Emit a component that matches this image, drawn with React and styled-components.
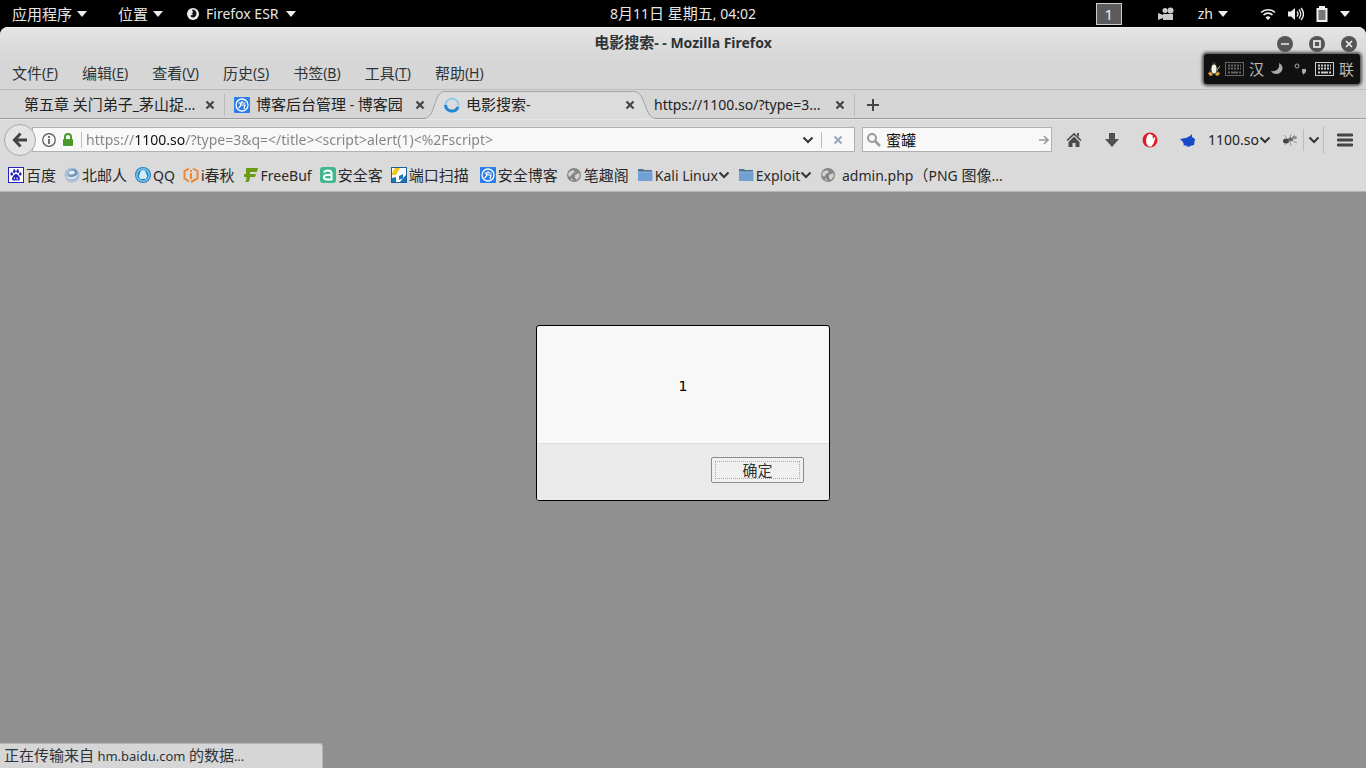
import React from "react";
import styled, { createGlobalStyle, css } from "styled-components";

const GlobalStyle = createGlobalStyle`
  * {
    box-sizing: border-box;
  }

  html,
  body,
  #root {
    height: 100%;
    margin: 0;
  }

  body,
  button,
  input {
    font-family: "Noto Sans", "Noto Sans CJK SC", sans-serif;
    font-size: 15px;
    line-height: 20px;
    color: #2e3436;
  }
`;

const Desktop = styled.div`
  display: flex;
  flex-direction: column;
  position: relative;
  min-height: 100%;
  background: #000;
`;

const PlainButton = styled.button`
  display: flex;
  align-items: center;
  padding: 0;
  border: 0;
  background: none;
  color: inherit;
  white-space: nowrap;
`;

const Latin = styled.span`
  font-size: ${(props) => (props.$small ? 13 : 14)}px;
`;

/* Panel at the top of the desktop */

const Panel = styled.header`
  display: grid;
  grid-template-columns: 1fr auto 1fr;
  align-items: center;
  height: 27px;
  background: #000;
  color: #e6e6e6;
`;

const PanelGroup = styled.div`
  display: flex;
  align-items: center;
  justify-content: ${(props) => (props.$end ? "flex-end" : "flex-start")};
  gap: 24px;
  padding: 0 ${(props) => (props.$end ? 16 : 12)}px;
`;

const PanelButton = styled(PlainButton)`
  gap: ${(props) => (props.$app ? 7 : 5)}px;
  margin-right: ${(props) => (props.$wide ? 7 : 0)}px;
`;

const SystemMenu = styled(PlainButton)`
  gap: 12px;
  margin-left: 8px;
`;

const Workspace = styled.button`
  width: 26px;
  height: 22px;
  margin-right: 12px;
  padding: 0;
  border: 1px solid #ccc;
  background: #5c5c5c;
  color: #eee;
`;

/* Browser window */

const Window = styled.main`
  display: flex;
  flex: 1;
  flex-direction: column;
  overflow: hidden;
  border-radius: 8px 8px 0 0;
  background: #dadada;
`;

const TitleBar = styled.div`
  display: grid;
  grid-template-columns: 1fr auto 1fr;
  align-items: center;
  height: 32px;
  border-top: 1px solid #f2f2f2;
  background: linear-gradient(#e4e4e4, #d7d7d7);
`;

const Title = styled.h1`
  grid-column: 2;
  margin: 0;
  padding-bottom: 2px;
  font-size: 15px;
  font-weight: 700;
  line-height: 20px;
`;

const WindowButtons = styled.div`
  display: flex;
  justify-content: flex-end;
  gap: 16px;
  padding-right: 9px;
`;

const MenuBar = styled.nav`
  display: flex;
  align-items: center;
  gap: 24px;
  height: 31px;
  padding: 0 12px 2px;
  border-bottom: 1px solid #bcbcbc;
  background: #d6d6d6;
`;

const AccessKey = styled.u`
  text-underline-offset: 2px;
`;

const TabStrip = styled.div`
  display: flex;
  height: 29px;
  padding-left: 15px;
  border-bottom: 1px solid #9c9c9c;
  background: #d5d5d5;
`;

const Tab = styled.div`
  display: flex;
  align-items: center;
  position: relative;
  width: 210px;
  height: 29px;
  padding: 0 9px;
  gap: 6px;
  ${(props) =>
    props.$divider &&
    css`
      background: linear-gradient(#bbb, #bbb) right center / 1px 22px no-repeat;
    `}
`;

const TabShape = styled.svg`
  position: absolute;
  top: 0;
  left: -11px;
`;

const TabLabel = styled.span`
  flex: 1;
  z-index: 1;
  overflow: hidden;
  color: #222;
  white-space: nowrap;
`;

const Icon = styled.svg`
  flex: none;
  z-index: 1;
`;

const IconButton = styled(PlainButton)`
  justify-content: center;
  z-index: 1;
  width: ${(props) => props.$width}px;
  height: ${(props) => props.$height || 24}px;
`;

const NavBar = styled.div`
  display: flex;
  align-items: center;
  height: 40px;
  padding-left: 4px;
  border-top: 1px solid #e6e6e6;
`;

const BackButton = styled.button`
  display: flex;
  align-items: center;
  justify-content: center;
  z-index: 1;
  width: 32px;
  height: 32px;
  padding: 0;
  border: 1px solid #a6a6a6;
  border-radius: 50%;
  background: #e4e4e4;
`;

const Field = styled.div`
  display: flex;
  align-items: center;
  height: 25px;
  border: 1px solid #b0b0b0;
  background: #f8f8f8;
`;

const UrlField = styled(Field)`
  flex: 1;
  margin: 0 7px 0 -4px;
  padding-left: 9px;
`;

const SiteIdentity = styled(PlainButton)`
  gap: 4px;
  margin-right: 5px;
`;

const SearchField = styled(Field)`
  width: 190px;
  margin-right: 3px;
  padding-left: 3px;
`;

const UrlInput = styled.input`
  flex: 1;
  min-width: 0;
  height: 22px;
  padding: 0 0 0 4px;
  border: 0;
  font-size: 14px;
  background: linear-gradient(
    90deg,
    #838383 52px,
    #111 52px,
    #111 103px,
    #838383 103px
  );
  background-clip: text;
  color: transparent;
`;

const SearchInput = styled.input`
  flex: 1;
  min-width: 0;
  height: 20px;
  padding: 0 4px;
  border: 0;
  background: none;
  color: #111;
`;

const Divider = styled.span`
  width: 1px;
  height: ${(props) => props.$height}px;
  background: #bdbdbd;
`;

const SiteButton = styled(PlainButton)`
  margin: 0 6px 0 1px;
  color: #222;
`;

const BookmarkBar = styled.nav`
  display: flex;
  align-items: center;
  height: 33px;
  padding: 0 8px;
  gap: 8px;
  border-bottom: 1px solid #b4b4b4;
`;

const Bookmark = styled.a`
  display: flex;
  align-items: center;
  margin-right: ${(props) => (props.$wide ? 3 : 0)}px;
  color: #2a2a2a;
  text-decoration: none;
  white-space: nowrap;
`;

const BookmarkLabel = styled.span`
  padding-left: 2px;
  white-space: pre;
`;

const Page = styled.section`
  display: flex;
  flex: 1;
  align-items: flex-start;
  justify-content: center;
  padding: 133px 16px 48px;
  background: #909090;
`;

const Dialog = styled.div`
  width: 294px;
  overflow: hidden;
  border: 1px solid #000;
  border-radius: 3px;
  background: #f8f8f8;
`;

const Message = styled.p`
  margin: 0;
  padding: 50px 16px 47px;
  color: #000;
  font-family: "DejaVu Sans", sans-serif;
  font-size: 14px;
  line-height: 20px;
  text-align: center;
`;

const DialogActions = styled.div`
  display: flex;
  justify-content: flex-end;
  padding: 13px 25px 17px;
  border-top: 1px solid #ddd;
  background: #eaeaea;
`;

const OkButton = styled.button`
  width: 93px;
  height: 26px;
  padding: 0;
  border: 1px solid #8c8c8c;
  border-radius: 2px;
  outline: 1px dotted #aaa;
  outline-offset: -5px;
  background: #f0f0f0;
  line-height: 20px;
`;

const StatusBar = styled.div`
  position: absolute;
  bottom: 0;
  left: 0;
  width: 323px;
  height: 25px;
  padding: 1px 4px;
  border: 1px solid #b4b4b4;
  border-width: 1px 1px 0 0;
  border-radius: 0 3px 0 0;
  background: #d6d6d6;
  white-space: nowrap;
`;

const InputMethodBar = styled.div`
  display: flex;
  align-items: center;
  position: absolute;
  top: 54px;
  right: 6px;
  width: 156px;
  height: 30px;
  padding: 0 4px;
  gap: 5px;
  border-radius: 3px;
  background: #111;
  box-shadow: 0 0 3px 2px #555;
  color: #bbb;
`;

const menus = [
  ["文件", "F"],
  ["编辑", "E"],
  ["查看", "V"],
  ["历史", "S"],
  ["书签", "B"],
  ["工具", "T"],
  ["帮助", "H"],
];

const tabs = [
  { id: 1, title: "第五章 关门弟子_茅山捉...", divider: true },
  { id: 2, title: "博客后台管理 - 博客园", icon: "blog" },
  { id: 3, title: "电影搜索-", icon: "loading", active: true },
  { id: 4, title: "https://1100.so/?type=3...", divider: true },
];

const bookmarks = [
  { title: "百度", icon: "baidu" },
  { title: "北邮人", icon: "byr" },
  { title: "QQ", icon: "qq" },
  { title: "i春秋", icon: "ichunqiu" },
  { title: "FreeBuf", icon: "freebuf" },
  { title: "安全客", icon: "anquanke" },
  { title: "端口扫描", icon: "scan", wide: true },
  { title: "安全博客", icon: "blog" },
  { title: "笔趣阁", icon: "globe" },
  { title: "Kali Linux", icon: "folder", menu: true },
  { title: "Exploit", icon: "folder", menu: true },
  { title: " admin.php（PNG 图像...", icon: "globe" },
];

// Latin runs are set a little smaller than the Chinese around them
const Text = ({ children, small }) =>
  children
    .split(/([\u0020-\u007e]+)/)
    .filter(Boolean)
    .map((run, index) =>
      /[\u0020-\u007e]/.test(run) ? (
        <Latin key={index} $small={small}>
          {run}
        </Latin>
      ) : (
        run
      )
    );

const Triangle = () => (
  <svg width="10" height="6" viewBox="0 0 10 6">
    <path d="M0 0h10L5 6z" fill="#eee" />
  </svg>
);

const Chevron = () => (
  <svg width="12" height="8" viewBox="0 0 12 8">
    <path d="M1.5 1.5 6 6l4.500-4.500" fill="none" stroke="#333" strokeWidth="2" />
  </svg>
);

const CloseIcon = ({ color = "#444" }) => (
  <svg width="10" height="10" viewBox="0 0 10 10">
    <path d="M1.500 1.500l7 7M8.500 1.500l-7 7" stroke={color} strokeWidth="2.200" />
  </svg>
);

const Keyboard = ({ color }) => (
  <svg width="19" height="14" viewBox="0 0 19 14">
    <rect x=".5" y=".5" width="18" height="13" fill="none" stroke={color} />
    <path d="M3 3.500h13M3 6.500h13" stroke={color} strokeWidth="2" strokeDasharray="2 1" />
    <path d="M3 10.500h2M6 10.500h7M14 10.500h2" stroke={color} strokeWidth="2" />
  </svg>
);

const siteIcons = {
  blog: (
    <>
      <rect width="16" height="16" rx="1" fill="#2b7de9" />
      <circle cx="8" cy="8" r="6" fill="none" stroke="#fff" strokeWidth="1.300" />
      <path d="M4.500 6h7M8 4v2M6.500 6v3l-2 2M6.500 8h4.500l-1 4" fill="none" stroke="#fff" strokeWidth="1.200" />
    </>
  ),
  loading: (
    <>
      <circle cx="8" cy="8" r="6.500" fill="none" stroke="#8fcaec" strokeWidth="2" />
      <path d="M1.500 8a6.500 6.500 0 0 0 12.500 2" fill="none" stroke="#2487cf" strokeWidth="3" />
    </>
  ),
  baidu: (
    <>
      <rect x=".5" y=".5" width="15" height="15" fill="#fff" stroke="#2424c0" />
      <ellipse cx="3.700" cy="7" rx="1.300" ry="1.800" fill="#2424c0" />
      <ellipse cx="6.300" cy="4.200" rx="1.300" ry="1.900" fill="#2424c0" />
      <ellipse cx="9.700" cy="4.200" rx="1.300" ry="1.900" fill="#2424c0" />
      <ellipse cx="12.300" cy="7" rx="1.300" ry="1.800" fill="#2424c0" />
      <path d="M8 7c1.500 0 2 1.300 3 2.400 1.300 1.300 1.400 4-.8 4.200-1 0-1.400-.3-2.200-.3s-1.200.3-2.200.3c-2.200-.2-2.100-2.900-.8-4.200C6 8.300 6.500 7 8 7z" fill="#2424c0" />
      <path d="M6.500 10.500v1.500M9 10.500v1.500h1" stroke="#fff" fill="none" />
    </>
  ),
  byr: (
    <>
      <circle cx="8" cy="8" r="7.500" fill="#a9bfd8" />
      <circle cx="9" cy="6.500" r="4.500" fill="#6f90ba" />
      <path d="M5 5c3-3 6-1 6 1-2 2-4 2-6 1zM1 9c4 2 9 2 13-2-1 5-9 7-13 2z" fill="#e3ebf3" />
    </>
  ),
  qq: (
    <>
      <circle cx="8" cy="8" r="8" fill="#2780bd" />
      <circle cx="8" cy="8" r="6.200" fill="none" stroke="#7cc4e8" strokeWidth="1.500" />
      <path d="M8 3c2 0 3 1.500 3 3.500 1 1.500 1.500 3 .8 3.500L11 12H5l-.8-2C3.500 9.500 4 8 5 6.500 5 4.500 6 3 8 3z" fill="#cfeaf8" />
    </>
  ),
  ichunqiu: (
    <>
      <path d="M6 1.500 1.500 4v7.500l4.500 3M10 1.500 14.500 4v7.500L8 15" fill="none" stroke="#ee8733" strokeWidth="2" />
      <path d="M8 6v6M8 3v2" stroke="#ee8733" strokeWidth="2" />
    </>
  ),
  freebuf: (
    <path d="M3 1h12l-1 4H7v2h6l-1 3H7c0 3-1 4.500-2 5H2c1-1 1.500-2 1.500-5H1V7h2z" fill="#6b9a15" />
  ),
  anquanke: (
    <>
      <rect width="16" height="16" rx="3" fill="#3fb88f" />
      <path d="M4 5.500C5 3 11 2.500 11.500 6v6.500H7c-4 0-4-4.500 0-4.500h4.500" fill="none" stroke="#fff" strokeWidth="2" />
    </>
  ),
  scan: (
    <>
      <rect x=".5" y=".5" width="15" height="15" fill="#fff" stroke="#1c5f9c" />
      <path d="M4 1h5L5 8H1V6z" fill="#f4c51d" />
      <path d="M8 6v3l4-2v4l3-3v7H9l3-4-4 2zM1 11l4-1v5H1z" fill="#1b76b5" />
    </>
  ),
  globe: (
    <>
      <circle cx="8" cy="8" r="7" fill="#858585" />
      <path d="M3 5l4-2 2 2-3 2-2 3-2-2zM9 8l4-2 1 3-3 4-2-2zM5 11l3 3-3-1z" fill="#d2d2d2" />
    </>
  ),
  folder: (
    <>
      <path d="M1 2h5l1 1h8v3H1z" fill="#51708f" />
      <path d="M1 5h14.500v9H1z" fill="#73a0d2" />
      <path d="M1 5h14" stroke="#91b6df" />
    </>
  ),
};

const SiteIcon = ({ name }) => (
  <Icon width="16" height="16" viewBox="0 0 16 16">
    {siteIcons[name]}
  </Icon>
);

const TopPanel = () => (
  <Panel>
    <PanelGroup>
      <PanelButton $wide>
        应用程序 <Triangle />
      </PanelButton>
      <PanelButton>
        位置 <Triangle />
      </PanelButton>
      <PanelButton $app>
        <svg width="12" height="12" viewBox="0 0 12 12">
          <circle cx="6" cy="6" r="6" fill="#eee" />
          <path d="M5 1.500c3 0 4.500 2 4.500 4S8 9.500 6 9.500 3.500 8 3.500 7c1 .5 2 .3 2.500-.5L4.500 5.500 6 4.500z" fill="#111" />
        </svg>
        <Latin>Firefox ESR</Latin> <Triangle />
      </PanelButton>
    </PanelGroup>
    <PanelButton>
      <span>
        <Text>8月11日 星期五, 04:02</Text>
      </span>
    </PanelButton>
    <PanelGroup $end>
      <Workspace>1</Workspace>
      <svg width="16" height="14" viewBox="0 0 16 14" fill="#ccc">
        <circle cx="7" cy="3.500" r="2.500" />
        <circle cx="12.500" cy="3.500" r="3" />
        <path d="M5 7h10v6H5v-2l-5 2V6l5 2z" />
      </svg>
      <PanelButton>
        <Latin>zh</Latin> <Triangle />
      </PanelButton>
      <SystemMenu aria-label="系统">
        <svg width="16" height="12" viewBox="0 0 16 12" fill="none" stroke="#eee">
          <path d="M1 4.500a10 10 0 0 1 14 0" strokeWidth="1.500" />
          <path d="M3.500 7a6.500 6.500 0 0 1 9 0" strokeWidth="1.700" />
          <path d="M5.500 9.500a3.500 3.500 0 0 1 5 0L8 12z" fill="#eee" stroke="none" />
        </svg>
        <svg width="16" height="14" viewBox="0 0 16 14" fill="none" stroke="#eee">
          <path d="M0 4.500h3L7 1v12L3 9.500H0z" fill="#eee" stroke="none" />
          <path d="M9 4.500q2 2.500 0 5M11 2.500q3.500 4.500 0 9M13 1q5 6 0 12" strokeWidth="1.300" />
        </svg>
        <svg width="12" height="16" viewBox="0 0 12 16">
          <path d="M3 0h6v2h2.500v14H.5V2H3z" fill="#eee" />
          <path d="M2.500 4h7v10h-7z" fill="#777" />
        </svg>
        <Triangle />
      </SystemMenu>
    </PanelGroup>
  </Panel>
);

const WindowButton = ({ label, children }) => (
  <PlainButton aria-label={label}>
    <svg width="16" height="16" viewBox="0 0 16 16" fill="none" stroke="#eee" strokeWidth="1.700">
      <circle cx="8" cy="8" r="8" fill="#555" stroke="none" />
      {children}
    </svg>
  </PlainButton>
);

const Navigation = () => (
  <NavBar>
    <BackButton aria-label="后退">
      <svg width="16" height="16" viewBox="0 0 16 16">
        <path d="M8.500 1.500 2.500 8l6 6.500M3 8h12" fill="none" stroke="#444" strokeWidth="3" />
      </svg>
    </BackButton>
    <UrlField>
      <SiteIdentity aria-label="网站信息">
        <svg width="14" height="14" viewBox="0 0 14 14">
          <circle cx="7" cy="7" r="6.300" fill="none" stroke="#555" strokeWidth="1.200" />
          <path d="M7 6v5M7 3v2" stroke="#444" strokeWidth="1.500" />
        </svg>
        <svg width="16" height="14" viewBox="0 0 16 14">
          <path d="M5 7V4a3 3 0 0 1 6 0v3" fill="none" stroke="#4a9a2a" strokeWidth="2" />
          <rect x="3" y="6" width="10" height="7" rx="1" fill="#4a9a2a" />
        </svg>
      </SiteIdentity>
      <Divider $height={16} />
      <UrlInput
        aria-label="地址"
        spellCheck="false"
        defaultValue="https://1100.so/?type=3&q=</title><script>alert(1)<%2Fscript>"
      />
      <IconButton $width={26} aria-label="历史记录">
        <Chevron />
      </IconButton>
      <Divider $height={16} />
      <IconButton $width={32} aria-label="停止">
        <CloseIcon color="#9aaaba" />
      </IconButton>
    </UrlField>
    <SearchField>
      <svg width="16" height="16" viewBox="0 0 16 16" fill="none" stroke="#999" strokeWidth="2">
        <circle cx="6" cy="6" r="4" />
        <path d="M9 9l5 5" strokeWidth="2.500" />
      </svg>
      <SearchInput aria-label="搜索" defaultValue="蜜罐" />
      <IconButton $width={14} aria-label="开始搜索">
        <svg width="10" height="10" viewBox="0 0 10 10">
          <path d="M0 5h9M5 1l4 4-4 4" fill="none" stroke="#999" strokeWidth="1.600" />
        </svg>
      </IconButton>
    </SearchField>
    <IconButton $width={38} aria-label="主页">
      <svg width="16" height="16" viewBox="0 0 16 16" fill="#4c4c4c">
        <path d="M8 4.500 13.500 10v5H9.500v-4h-3v4h-4v-5z" />
        <path d="M1 8.500 8 2l7 6.500" fill="none" stroke="#4c4c4c" strokeWidth="1.700" />
        <path d="M11 1h2v4l-2-2z" />
      </svg>
    </IconButton>
    <IconButton $width={38} aria-label="下载">
      <svg width="16" height="16" viewBox="0 0 16 16">
        <path d="M5 1h6v6h4l-7 8-7-8h4z" fill="#505050" />
      </svg>
    </IconButton>
    <IconButton $width={38} aria-label="拦截">
      <svg width="16" height="16" viewBox="0 0 16 16">
        <circle cx="8" cy="8" r="7.500" fill="#e01b24" />
        <path d="M5 4l1-1 1-1 1.500 0 1 1h1l.5 4 1.500-2 1 .5-2 6-2 3H6.500C4 12 4 10 4 8z" fill="#fff" />
      </svg>
    </IconButton>
    <IconButton $width={38} aria-label="扩展">
      <svg width="16" height="16" viewBox="0 0 16 16">
        <path d="M0 7l6-1 4-2 2-2v3l3 2-1 6-4 1-1 1-5-2-1-3z" fill="#1749c8" />
        <path d="M3 13l4 1" stroke="#7d95d0" />
      </svg>
    </IconButton>
    <SiteButton>
      <Latin>1100.so</Latin> <Chevron />
    </SiteButton>
    <IconButton $width={26} aria-label="Firebug">
      <svg width="16" height="16" viewBox="0 0 16 16">
        <path d="M5 6l-3-3M8 6l1-4M10 6l3-3M5 10l-2 3M8 10l1 4M11 9l4 2" fill="none" stroke="#999" />
        <ellipse cx="4" cy="9" rx="3" ry="2.500" fill="#444" />
        <ellipse cx="8.500" cy="7.500" rx="2.500" ry="2" fill="#666" />
        <ellipse cx="12.500" cy="5.500" rx="2.500" ry="1.500" fill="#888" />
      </svg>
    </IconButton>
    <Divider $height={22} />
    <IconButton $width={19} aria-label="Firebug 菜单">
      <Chevron />
    </IconButton>
    <Divider $height={28} />
    <IconButton $width={42} aria-label="菜单">
      <svg width="16" height="14" viewBox="0 0 16 14">
        <path d="M1 2h14M1 7h14M1 12h14" stroke="#444" strokeWidth="2.800" strokeLinecap="round" />
      </svg>
    </IconButton>
  </NavBar>
);

const App = () => {
  return (
    <Desktop>
      <GlobalStyle />
      <TopPanel />
      <Window>
        <TitleBar>
          <Title>
            <Text>电影搜索- - Mozilla Firefox</Text>
          </Title>
          <WindowButtons>
            <WindowButton label="最小化">
              <path d="M4 8h8" />
            </WindowButton>
            <WindowButton label="最大化">
              <rect x="5" y="5" width="6" height="6" />
            </WindowButton>
            <WindowButton label="关闭">
              <path d="M5 5l6 6M11 5l-6 6" />
            </WindowButton>
          </WindowButtons>
        </TitleBar>
        <MenuBar>
          {menus.map(([name, key]) => (
            <PlainButton key={key}>
              {name}
              <Latin>
                (<AccessKey>{key}</AccessKey>)
              </Latin>
            </PlainButton>
          ))}
        </MenuBar>
        <TabStrip>
          {tabs.map((tab) => (
            <Tab key={tab.id} $divider={tab.divider}>
              {tab.active && (
                <TabShape width="232" height="29" viewBox="0 0 232 29">
                  <path
                    d="M0 28.500C12 28.500 9 1.500 21 1.500H210C222 1.500 220 28.500 232 28.500"
                    fill="#dcdcdc"
                    stroke="#a2a2a2"
                  />
                  <path d="M2 28.500h228" stroke="#dcdcdc" />
                </TabShape>
              )}
              {tab.icon && <SiteIcon name={tab.icon} />}
              <TabLabel>
                <Text>{tab.title}</Text>
              </TabLabel>
              <IconButton $width={12} aria-label="关闭标签页">
                <CloseIcon />
              </IconButton>
            </Tab>
          ))}
          <IconButton $width={36} $height={29} aria-label="新标签页">
            <svg width="12" height="12" viewBox="0 0 12 12">
              <path d="M6 0v12M0 6h12" stroke="#444" strokeWidth="2" />
            </svg>
          </IconButton>
        </TabStrip>
        <Navigation />
        <BookmarkBar>
          {bookmarks.map((item) => (
            <Bookmark key={item.title} href="#" $wide={item.wide}>
              <SiteIcon name={item.icon} />
              <BookmarkLabel>
                <Text>{item.title}</Text>
              </BookmarkLabel>
              {item.menu && <Chevron />}
            </Bookmark>
          ))}
        </BookmarkBar>
        <Page>
          <Dialog role="dialog" aria-label="提示">
            <Message>1</Message>
            <DialogActions>
              <OkButton>确定</OkButton>
            </DialogActions>
          </Dialog>
        </Page>
      </Window>
      <InputMethodBar>
        <svg width="12" height="16" viewBox="1 0 12 16">
          <path d="M7 1c2 0 2 3 3 5l3 7H1l3-7c1-2 1-5 3-5z" fill="#333" />
          <ellipse cx="7" cy="8" rx="2.500" ry="4.500" fill="#f5f0e4" />
          <path d="M1 12l3-1 2 3-3 1zM13 12l-3-1-2 3 3 1z" fill="#e8a33a" />
          <path d="M10 9l3-4" stroke="#d8b070" />
        </svg>
        <Keyboard color="#666" />
        <span>汉</span>
        <svg width="18" height="14" viewBox="0 0 18 14">
          <path d="M10 1c6 3 4 11-3 11-2 0-4-1-5-3 6 1 9-3 8-8z" fill="#aaa" />
        </svg>
        <svg width="18" height="14" viewBox="0 0 18 14">
          <circle cx="5" cy="4" r="2" fill="none" stroke="#aaa" />
          <path d="M10 7h4v3l-3 3v-2h-1z" fill="#aaa" />
        </svg>
        <Keyboard color="#ccc" />
        <span>联</span>
      </InputMethodBar>
      <StatusBar role="status">
        <Text small>正在传输来自 hm.baidu.com 的数据...</Text>
      </StatusBar>
    </Desktop>
  );
};

export default App;
